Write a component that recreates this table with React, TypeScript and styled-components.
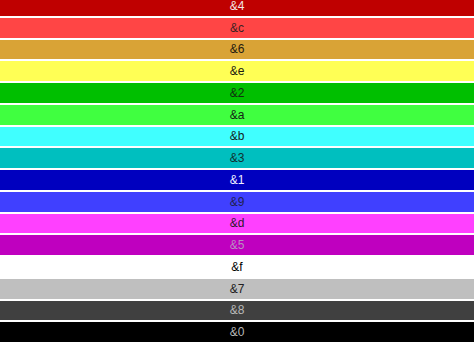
import React from "react";
import styled, { createGlobalStyle } from "styled-components";

const GlobalStyle = createGlobalStyle`
    html, body {
        margin: 0;
        padding: 0;
        background: #ffffff;
        overflow: hidden;
    }
`;

interface ColorCode {
    code: string;
    bg: string;
    fg: string;
}

const codes: ColorCode[] = [
    { code: "&4", bg: "#bf0000", fg: "#f2e6e6" },
    { code: "&c", bg: "#ff4545", fg: "#3a2222" },
    { code: "&6", bg: "#d9a336", fg: "#1e1a10" },
    { code: "&e", bg: "#ffff55", fg: "#1a1a10" },
    { code: "&2", bg: "#00bf00", fg: "#103010" },
    { code: "&a", bg: "#40ff40", fg: "#142414" },
    { code: "&b", bg: "#40ffff", fg: "#142424" },
    { code: "&3", bg: "#00bfbf", fg: "#103030" },
    { code: "&1", bg: "#0000bf", fg: "#f0f0ff" },
    { code: "&9", bg: "#4040ff", fg: "#202050" },
    { code: "&d", bg: "#ff40ff", fg: "#301830" },
    { code: "&5", bg: "#bf00bf", fg: "#b890c0" },
    { code: "&f", bg: "#ffffff", fg: "#000000" },
    { code: "&7", bg: "#bfbfbf", fg: "#202020" },
    { code: "&8", bg: "#404040", fg: "#b8b8b8" },
    { code: "&0", bg: "#000000", fg: "#b8b8b8" },
];

const Stack = styled.div`
    display: flex;
    flex-direction: column;
    gap: 2px;
    height: 346px;
    margin-top: -4px;
`;

const Bar = styled.div<{ $bg: string; $fg: string }>`
    flex: 1;
    display: flex;
    align-items: center;
    justify-content: center;
    background: ${(p) => p.$bg};
    color: ${(p) => p.$fg};
    font-family: "Liberation Sans", Arial, sans-serif;
    font-size: 12px;
    line-height: 1;
`;

export default function App() {
    return (
        <>
            <GlobalStyle />
            <Stack>
                {codes.map((c) => (
                    <Bar key={c.code} $bg={c.bg} $fg={c.fg}>
                        {c.code}
                    </Bar>
                ))}
            </Stack>
        </>
    );
}
